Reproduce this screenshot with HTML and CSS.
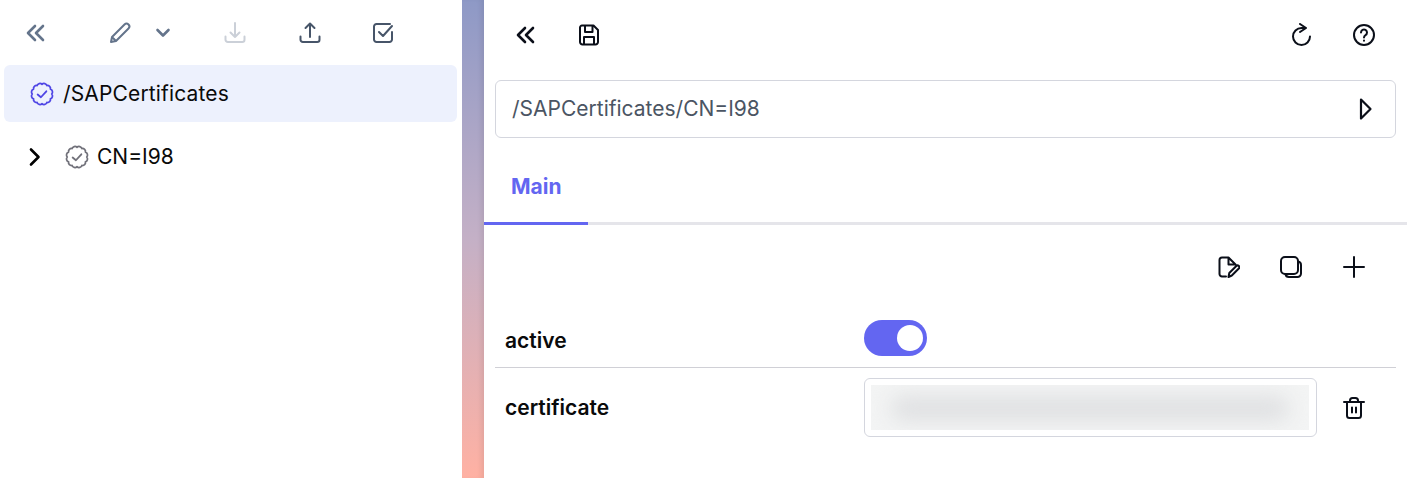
FILE: index.html
```html
<!DOCTYPE html>
<html lang="en">
<head>
    <meta charset="UTF-8">
    <title>SAP Certificates</title>
    <link rel="stylesheet" href="styles.css">
</head>
<body>
    <div class="layout">
        <div class="tree-pane">
            <div class="tree-toolbar">
                <svg class="icon slate heavy" viewBox="0 0 24 24"><path d="M11 19 4 12l7-7M19 19l-7-7 7-7"/></svg>
                <svg class="icon slate tool-edit" viewBox="0 0 24 24"><path d="M3 21l1-5L16.500 3.500a2.800 2.800 0 0 1 4 4L8 20zM4 16l4 4"/></svg>
                <svg class="icon slate heavy tool-menu" viewBox="0 0 24 24"><path d="M6.500 9 12 14.500 17.500 9"/></svg>
                <svg class="icon faded tool-download" viewBox="0 0 24 24"><path d="M2.500 15.500v3.200a2.300 2.300 0 0 0 2.300 2.300h14.400a2.300 2.300 0 0 0 2.300-2.300v-3.200M7.500 11.500l4.500 4.500 4.500-4.500M12 16V2"/></svg>
                <svg class="icon dark-slate tool-upload" viewBox="0 0 24 24"><path d="M2.500 15.500v3.200a2.300 2.300 0 0 0 2.300 2.300h14.400a2.300 2.300 0 0 0 2.300-2.300v-3.200M7.500 7 12 2.500 16.500 7M12 2.500V16"/></svg>
                <svg class="icon dark-slate tool-check" viewBox="0 0 24 24"><path d="M21 11v7.500a2.500 2.500 0 0 1-2.500 2.500h-13A2.500 2.500 0 0 1 3 18.500v-13A2.500 2.500 0 0 1 5.500 3H19M8 11l4 4 9-10"/></svg>
            </div>
            <div class="tree-row selected">
                <svg class="icon badge indigo" viewBox="0 0 24 24"><path d="M21 12a2.800 2.800 0 0 1-1.210 4.500 2.800 2.800 0 0 1-3.290 3.290A2.800 2.800 0 0 1 12 21a2.800 2.800 0 0 1-4.500-1.210 2.800 2.800 0 0 1-3.290-3.290A2.800 2.800 0 0 1 3 12a2.800 2.800 0 0 1 1.210-4.500A2.800 2.800 0 0 1 7.500 4.210 2.800 2.800 0 0 1 12 3a2.800 2.800 0 0 1 4.500 1.210 2.800 2.800 0 0 1 3.290 3.290A2.800 2.800 0 0 1 21 12z"/><path class="tick" d="M8 12.500l3 2.500 5-5.500"/></svg>
                <span>/SAPCertificates</span>
            </div>
            <div class="tree-row child">
                <svg class="icon caret" viewBox="0 0 24 24"><path d="M8 4.500 15.500 12 8 19.500"/></svg>
                <svg class="icon badge grey" viewBox="0 0 24 24"><path d="M21 12a2.800 2.800 0 0 1-1.210 4.500 2.800 2.800 0 0 1-3.290 3.290A2.800 2.800 0 0 1 12 21a2.800 2.800 0 0 1-4.500-1.210 2.800 2.800 0 0 1-3.290-3.290A2.800 2.800 0 0 1 3 12a2.800 2.800 0 0 1 1.210-4.500A2.800 2.800 0 0 1 7.500 4.210 2.800 2.800 0 0 1 12 3a2.800 2.800 0 0 1 4.500 1.210 2.800 2.800 0 0 1 3.290 3.290A2.800 2.800 0 0 1 21 12z"/><path class="tick" d="M8 12.500l3 2.500 5-5.500"/></svg>
                <span>CN=I98</span>
            </div>
        </div>

        <div class="splitter"></div>

        <div class="detail-pane">
            <div class="detail-toolbar">
                <svg class="icon heavy" viewBox="0 0 24 24"><path d="M11 19 4 12l7-7M19 19l-7-7 7-7"/></svg>
                <svg class="icon tool-save" viewBox="0 0 24 24"><path d="M5 2.500h11.500L21 7v12a2.500 2.500 0 0 1-2.500 2.500h-13A2.500 2.500 0 0 1 3 19V4.500a2 2 0 0 1 2-2zM8 2.500V9h7.500V2.500M7 21.500V14h10v7.500"/></svg>
                <div class="toolbar-right">
                    <svg class="icon" viewBox="0 0 24 24"><path d="M11 1l6 4-6 4M17 5h-4.500A8.500 8.500 0 1 0 21 13.500"/></svg>
                    <svg class="icon" viewBox="0 0 24 24"><circle cx="12" cy="12" r="10"/><path d="M9 9.500a3 3 0 1 1 4.500 2.600c-1 .6-1.500 1.200-1.500 2.400M12 17.500v.2"/></svg>
                </div>
            </div>

            <div class="path-box">
                <span>/SAPCertificates/CN=I98</span>
                <svg class="icon play" viewBox="0 0 24 24"><path d="M8 2.500 17.500 12 8 21.500z"/></svg>
            </div>

            <div class="tabs">
                <div class="tab active-tab">Main</div>
            </div>

            <div class="actions">
                <svg class="icon" viewBox="0 0 24 24"><path d="M10 21.500H6a2.500 2.500 0 0 1-2.500-2.500V5A2.500 2.500 0 0 1 6 2.500h6.500l7 7M12.500 2.500v7h7M12.500 22l.8-4 7-7a1.700 1.700 0 0 1 2.500 2.500l-7 7z"/></svg>
                <svg class="icon" viewBox="0 0 24 24"><rect x="2" y="2" width="17" height="17" rx="4"/><path d="M19 6.500a3.500 3.500 0 0 1 3 3.500v8.500a3.500 3.500 0 0 1-3.500 3.500H10a3.500 3.500 0 0 1-3.500-3"/></svg>
                <svg class="icon" viewBox="0 0 24 24"><path d="M12 2v20M2 12h20"/></svg>
            </div>

            <div class="field field-active">
                <div class="field-name">active</div>
                <div class="toggle"><div class="toggle-knob"></div></div>
            </div>
            <div class="field field-cert">
                <div class="field-name">certificate</div>
                <div class="cert-box">
                    <div class="cert-blur"><div class="cert-smear"></div></div>
                </div>
                <svg class="icon trash" viewBox="0 0 24 24"><path d="M2 6h20M5 6h14v13.500a2.500 2.500 0 0 1-2.500 2.500h-9A2.500 2.500 0 0 1 5 19.500zM8 6V4.500A2.500 2.500 0 0 1 10.500 2h3A2.500 2.500 0 0 1 16 4.500V6M10 11.500v5M14 11.500v5"/></svg>
            </div>
        </div>
    </div>
</body>
</html>
```
FILE: styles.css
```css
html, body {
    height: 100%;
}
body {
    font-family: Inter, "Liberation Sans", sans-serif;
    margin: 0;
    background: white;
    color: #0a0a0a;
    overflow: hidden;
}
.layout {
    display: flex;
    height: 478px;
}
.icon {
    width: 24px;
    height: 24px;
    flex: none;
    fill: none;
    stroke: #0b0f19;
    stroke-width: 2;
    stroke-linecap: round;
    stroke-linejoin: round;
}
.heavy { stroke-width: 2.6; }
.play { stroke-width: 2.2; }
.slate { stroke: #64748b; }
.dark-slate { stroke: #475569; }
.faded { stroke: #cbd0d8; }
.indigo { stroke: #4f46e5; }
.grey { stroke: #71717a; }

/* left tree */
.tree-pane {
    width: 462px;
    flex: none;
}
.tree-toolbar {
    display: flex;
    align-items: center;
    height: 65px;
    padding-left: 24px;
}
.tool-edit { margin-left: 60px; }
.tool-menu { margin-left: 19px; }
.tool-download { margin-left: 48px; }
.tool-upload { margin-left: 51px; }
.tool-check { margin-left: 49px; }
.tree-row {
    display: flex;
    align-items: center;
    font-size: 21px;
}
.selected {
    height: 57px;
    margin: 0 5px 0 4px;
    padding-left: 25px;
    gap: 8px;
    background: #edf1fd;
    border-radius: 6px;
    letter-spacing: .15px;
}
.child {
    height: 69px;
    padding-left: 23px;
}
.child .badge {
    margin-left: 17px;
    margin-right: 7px;
}
.badge {
    width: 26px;
    height: 26px;
    stroke-width: 1.6;
}
.tick {
    stroke-width: 1.7;
}
.caret {
    stroke: #000;
    stroke-width: 2.6;
}

/* drag handle between panes */
.splitter {
    width: 22px;
    flex: none;
    background: linear-gradient(180deg, #8e99c6 0%, #c4b0c6 50%, #ffb1a3 100%);
    box-shadow: inset -5px 0 5px -2px rgba(0, 0, 0, .07);
}

/* right detail */
.detail-pane {
    flex: 1;
    min-width: 0;
}
.detail-toolbar {
    display: flex;
    align-items: center;
    height: 69px;
    padding: 0 31px 0 30px;
}
.tool-save { margin-left: 39px; }
.toolbar-right {
    margin-left: auto;
    display: flex;
    gap: 39px;
}
.path-box {
    display: flex;
    align-items: center;
    justify-content: space-between;
    height: 56px;
    margin: 11px 11px 0;
    padding: 0 18px 0 16px;
    border: 1px solid #d4d6de;
    border-radius: 6px;
    font-size: 21px;
    color: #4b5563;
}
.path-box span {
    padding-bottom: 2px;
}
.tabs {
    display: flex;
    height: 84px;
    border-bottom: 3px solid #e5e5ea;
}
.tab {
    width: 104px;
    padding-top: 36px;
    padding-left: 27px;
    box-sizing: border-box;
    font-size: 21px;
    font-weight: 700;
}
.active-tab {
    color: #6366f1;
    border-bottom: 3px solid #6366f1;
    height: 87px;
}
.actions {
    display: flex;
    justify-content: flex-end;
    align-items: center;
    gap: 39px;
    height: 84px;
    padding-right: 41px;
}
.field {
    display: flex;
    align-items: center;
    margin: 0 11px;
}
.field-name {
    width: 369px;
    padding-left: 10px;
    box-sizing: border-box;
    font-size: 21px;
    font-weight: 600;
}
.field-active {
    height: 58px;
    border-bottom: 1px solid #d0d0d6;
}
.field-active .field-name {
    padding-top: 4px;
}
.toggle {
    width: 63px;
    height: 36px;
    border-radius: 18px;
    background: #6366f1;
    display: flex;
    align-items: center;
    justify-content: flex-end;
    padding-right: 4px;
    box-sizing: border-box;
}
.toggle-knob {
    width: 26px;
    height: 26px;
    border-radius: 50%;
    background: white;
}
.field-cert {
    height: 79px;
}
.cert-box {
    width: 453px;
    height: 59px;
    padding: 6px 7px 6px 6px;
    box-sizing: border-box;
    border: 1px solid #d4d6de;
    border-radius: 6px;
}
.cert-blur {
    height: 100%;
    background: #f3f4f4;
    overflow: hidden;
}
.cert-smear {
    height: 25px;
    margin: 11px 20px;
    background: #dfe0e2;
    border-radius: 12px;
    filter: blur(10px);
}
.trash {
    margin-left: 25px;
}
```
